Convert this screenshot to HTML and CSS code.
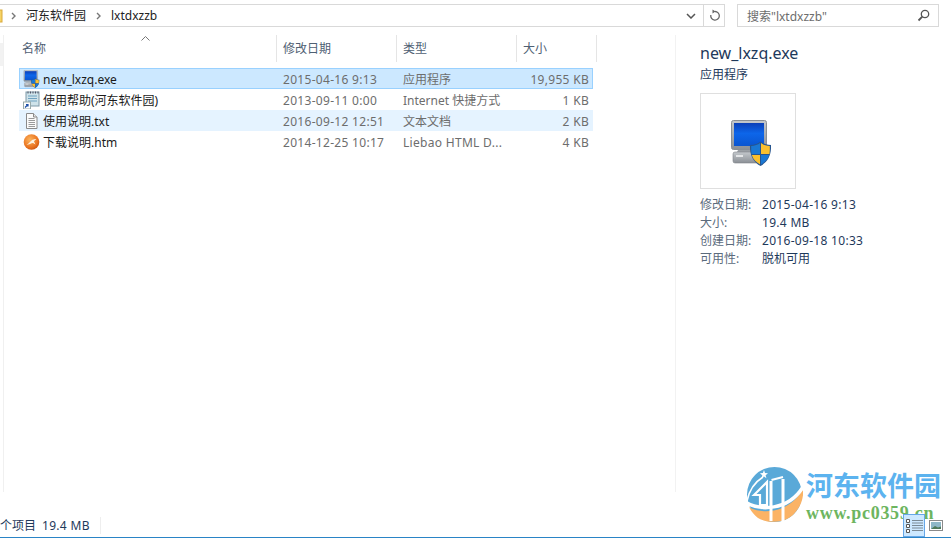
FILE: index.html
```html
<!DOCTYPE html>
<html lang="zh-CN">
<head>
<meta charset="utf-8">
<title>lxtdxzzb</title>
<link rel="stylesheet" href="styles.css">
</head>
<body>
<svg class="defs" width="0" height="0">
  <defs>
    <linearGradient id="scr" x1="0" y1="0" x2="0" y2="1"><stop offset="0" stop-color="#0a3fb8"/><stop offset=".45" stop-color="#0d66ea"/><stop offset="1" stop-color="#0a55d0"/></linearGradient>
    <linearGradient id="case" x1="0" y1="0" x2="0" y2="1"><stop offset="0" stop-color="#c4c8cc"/><stop offset="1" stop-color="#8b9096"/></linearGradient>
    <radialGradient id="orb" cx=".4" cy=".35" r=".7"><stop offset="0" stop-color="#fbb45e"/><stop offset=".7" stop-color="#ea7420"/><stop offset="1" stop-color="#c9540f"/></radialGradient>
    <symbol id="exe" viewBox="0 0 40 46">
      <rect x="0.5" y="0.5" width="35" height="29" rx="2" fill="url(#case)" stroke="#8a8f94"/>
      <rect x="3" y="3" width="30" height="23" fill="url(#scr)"/>
      <path d="M7 30h20l1 2H6z" fill="#9a9fa4"/>
      <rect x="2" y="32" width="28" height="11" rx="2" fill="url(#case)" stroke="#80858a" stroke-width=".6"/>
      <rect x="5" y="35" width="7" height="2" fill="#e4e6e8"/>
      <path d="M19 25c5 0 8-1.500 10.500-3.500 2.500 2 6 3.500 10.500 3.500 .5 10-3 17-10.500 21-7.500-4-11-11-10.500-21z" fill="#27558f"/>
      <path d="M29 23v11h-8.500c-.3-2-.4-5-.3-8 3.500-.2 6.800-1.200 8.800-3z" fill="#1a78d4"/>
      <path d="M30 23c2 1.800 5 2.800 8.800 3 .1 3 0 6-.3 8H30z" fill="#fbc02d"/>
      <path d="M20.800 35H29v9.500c-4-2.500-7-5-8.200-9.500z" fill="#fbc02d"/>
      <path d="M30 35h8.200c-1.200 4.500-4.200 7-8.200 9.500z" fill="#1a78d4"/>
    </symbol>
  </defs>
</svg>
<div class="window">
  <header class="toolbar">
    <div class="address">
      <svg class="folder" width="3" height="14" viewBox="0 0 3 14"><rect x="-8" y="1" width="10" height="12" fill="#f6d365" stroke="#d9a93a"/></svg>
      <svg class="crumb-arrow" width="7" height="8" viewBox="0 0 7 8"><path d="M2 1l3 3-3 3" fill="none" stroke="#777" stroke-width="1.400"/></svg>
      <span class="crumb">河东软件园</span>
      <svg class="crumb-arrow" width="7" height="8" viewBox="0 0 7 8"><path d="M2 1l3 3-3 3" fill="none" stroke="#777" stroke-width="1.400"/></svg>
      <span class="crumb">lxtdxzzb</span>
      <svg class="chevron" width="10" height="6" viewBox="0 0 10 6"><path d="M1 1l4 4 4-4" fill="none" stroke="#555" stroke-width="1.500"/></svg>
      <span class="refresh">
        <svg width="12" height="13" viewBox="0 0 12 13"><path d="M6 2.500a4.300 4.300 0 1 1-4.200 3.500" fill="none" stroke="#666" stroke-width="1.300"/><path d="M3.500 0.500l3 2-3 2z" fill="#666"/></svg>
      </span>
    </div>
    <div class="search">
      <span class="search-text">搜索"lxtdxzzb"</span>
      <svg width="13" height="13" viewBox="0 0 13 13"><circle cx="8" cy="5" r="3.700" fill="none" stroke="#555" stroke-width="1.300"/><path d="M5.300 7.700L1.500 11.500" stroke="#555" stroke-width="1.800"/></svg>
    </div>
  </header>

  <main class="content">
    <section class="files">
      <div class="gutter"><span class="gutter-thumb"></span></div>
      <div class="list">
        <div class="head">
          <span class="sort"><svg width="9" height="5" viewBox="0 0 9 5"><path d="M.5 4.500l4-4 4 4" fill="none" stroke="#777"/></svg></span>
          <div class="hcell col-name">名称</div>
          <div class="hcell col-date">修改日期</div>
          <div class="hcell col-type">类型</div>
          <div class="hcell col-size">大小</div>
        </div>
        <div class="rows">
          <div class="row selected">
            <div class="cell col-name name"><svg class="ico" width="17" height="18"><use href="#exe"/></svg>new_lxzq.exe</div>
            <div class="cell col-date wide">2015-04-16 9:13</div>
            <div class="cell col-type">应用程序</div>
            <div class="cell col-size num wide">19,955 KB</div>
          </div>
          <div class="row">
            <div class="cell col-name name">
              <svg class="ico" width="17" height="18" viewBox="0 0 17 18"><rect x="3" y="1" width="13" height="14" fill="#cfe3ea" stroke="#7f9aa8"/><path d="M5 .5v2M7.500 .5v2M10 .5v2M12.500 .5v2M15 .5v2" stroke="#556"/><path d="M5 5h9M5 7.500h9M5 10h9" stroke="#6fa2c0"/><rect x="0.500" y="11" width="7" height="7" fill="#fff" stroke="#9aa"/><path d="M2 16.500l3-3M3 13.500h2v2" fill="none" stroke="#1c4fa8" stroke-width="1.200"/></svg>
              使用帮助(河东软件园)</div>
            <div class="cell col-date wide">2013-09-11 0:00</div>
            <div class="cell col-type">Internet 快捷方式</div>
            <div class="cell col-size num wide">1 KB</div>
          </div>
          <div class="row hover">
            <div class="cell col-name name">
              <svg class="ico" width="17" height="18" viewBox="0 0 17 18"><path d="M3.500 1.500h7l3.500 3.500v11.500h-10.500z" fill="#fbfbfb" stroke="#8a8a8a"/><path d="M10.500 1.500v3.500h3.500" fill="#e6e6e6" stroke="#8a8a8a"/><path d="M5.500 6.500h6M5.500 8.500h6.500M5.500 10.500h6.500M5.500 12.500h6.500M5.500 14.500h6.500" stroke="#9a9a9a"/></svg>
              使用说明.txt</div>
            <div class="cell col-date wide">2016-09-12 12:51</div>
            <div class="cell col-type">文本文档</div>
            <div class="cell col-size num wide">2 KB</div>
          </div>
          <div class="row">
            <div class="cell col-name name">
              <svg class="ico" width="17" height="18" viewBox="0 0 17 18"><circle cx="8.500" cy="9" r="7.800" fill="url(#orb)"/><path d="M3.500 12c2-1 3-3 5-4.500 1.200-1 3-1.500 5-1.500-1 .8-2 1.500-2.500 2.500l1.500 3-2.500-1.500c-1 0-2 .5-3 1-1 .2-2.500.7-3.500 1z" fill="#fdf1e0"/></svg>
              下载说明.htm</div>
            <div class="cell col-date wide">2014-12-25 10:17</div>
            <div class="cell col-type wide">Liebao HTML D...</div>
            <div class="cell col-size num wide">4 KB</div>
          </div>
        </div>
      </div>
    </section>

    <aside class="details">
      <h1 class="d-title">new_lxzq.exe</h1>
      <p class="d-kind">应用程序</p>
      <div class="preview"><svg width="40" height="46"><use href="#exe"/></svg></div>
      <dl class="props">
        <dt>修改日期:</dt><dd class="wide">2015-04-16 9:13</dd>
        <dt>大小:</dt><dd class="wide">19.4 MB</dd>
        <dt>创建日期:</dt><dd class="wide">2016-09-18 10:33</dd>
        <dt>可用性:</dt><dd>脱机可用</dd>
      </dl>
    </aside>
  </main>

  <footer class="status">
    <span class="st-items">个项目</span>
    <span class="st-size wide">19.4 MB</span>
    <span class="st-sep"></span>
    <span class="views">
      <span class="view active"><svg width="17" height="15" viewBox="0 0 17 15"><path d="M.5 1.500h3v3h-3zM.5 6.500h3v3h-3zM.5 11.500h3v3h-3z" fill="#fff" stroke="#555"/><path d="M6 2.500h11M6 5h11M6 7.500h11M6 10h11M6 12.500h11" stroke="#7a8a96"/></svg></span>
      <span class="view"><svg width="14" height="11" viewBox="0 0 14 11"><rect x=".5" y=".5" width="13" height="10" fill="#fff" stroke="#8a8a8a"/><rect x="2" y="2" width="10" height="7" fill="#8fb8c8"/><path d="M2 9l4-3 3 1.500 3-1V9z" fill="#4f7a5a"/></svg></span>
    </span>
  </footer>

  <div class="watermark">
    <svg class="wm-logo" width="57" height="56" viewBox="0 0 57 56">
      <circle cx="28.500" cy="27.500" r="27.500" fill="#5aa9d8"/>
      <path d="M3 40C14 47 42 48 57 22 58 30 55 40 47 48 38 56 22 57 12 51 8 48 5 44 3 40z" fill="#fbb365"/>
      <path d="M-1 35C14 44 42 44 57 20" fill="none" stroke="#fff" stroke-width="3.500"/>
      <path d="M1 34C3 24 9 15 17 10" fill="none" stroke="#fff" stroke-width="1.600"/>
      <path d="M8 28L21 15V38H14V28z" fill="#5aa9d8" stroke="#fff" stroke-width="2.200"/>
      <path d="M25 14V54M37 12V54" stroke="#fff" stroke-width="3"/>
      <path d="M25.500 13L37 10" stroke="#fff" stroke-width="2"/>
      <path d="M18 3l1 3 3 .2-2.400 2 .8 3L18 9.500 15.500 11.200l.8-3-2.400-2 3-.2z" fill="#fff"/>
    </svg>
    <div class="wm-text">
      <div class="wm-cn">河东软件园</div>
      <div class="wm-url">www.pc0359.cn</div>
    </div>
  </div>
</div>
</body>
</html>
```
FILE: styles.css
```css
* { box-sizing: border-box; }
html, body { margin: 0; padding: 0; height: 100%; background: #fff; overflow: hidden; }
body { font-family: "Noto Sans", "Noto Sans CJK SC", sans-serif; font-size: 12px; color: #1a1a1a; }
.defs { display: block; height: 0; }
.window { position: relative; width: 951px; height: 538px; display: flex; flex-direction: column; overflow: hidden; }
.wide { letter-spacing: .3px; }

.toolbar { display: flex; height: 23px; margin-top: 4px; gap: 12px; flex: none; padding-right: 12px; }
.address { width: 725px; display: flex; align-items: center; border: 1px solid #d9d9d9; border-left: 0; }
.folder { flex: none; margin-right: 7px; }
.crumb-arrow { flex: none; margin-right: 9px; }
.crumb { margin-right: 9px; line-height: 18px; color: #222; }
.chevron { margin-left: auto; margin-right: 7px; }
.refresh { width: 21px; height: 100%; border-left: 1px solid #d9d9d9; display: flex; align-items: center; justify-content: center; padding-left: 1px; }
.search { width: 202px; display: flex; align-items: center; justify-content: space-between; border: 1px solid #d9d9d9; padding: 0 8px 0 9px; }
.search-text { color: #6d6d6d; }

.content { flex: 1; display: flex; min-height: 0; }
.files { width: 676px; flex: none; display: flex; margin-top: 8px; margin-bottom: 22px; border-right: 1px solid #f2f2f2; }
.gutter { width: 4px; flex: none; border-right: 1px solid #f0f0f0; margin-right: 15px; padding-top: 8px; }
.gutter-thumb { display: block; width: 3px; height: 23px; background: #f2f2f2; }
.list { width: 578px; }
.head { position: relative; display: flex; height: 27px; margin-bottom: 6px; }
.sort { position: absolute; left: 122px; top: -1px; line-height: 5px; }
.hcell { display: flex; align-items: center; height: 27px; color: #4f6073; border-right: 1px solid #e5e5e5; line-height: 27px; }
.col-name { width: 258px; padding-left: 3px; flex: none; }
.col-date { width: 120px; padding-left: 6px; flex: none; }
.col-type { width: 120px; padding-left: 6px; flex: none; }
.col-size { width: 80px; padding-left: 6px; flex: none; }

.rows { width: 574px; }
.row { display: flex; height: 21px; align-items: center; color: #6d6d6d; }
.row.selected { background: #cce8ff; box-shadow: inset 0 0 0 1px #99d1ff; }
.row.hover { background: #e5f3ff; }
.cell { white-space: nowrap; line-height: 21px; padding-top: 1px; }
.row .col-name { width: 257px; }
.row .col-size { width: 77px; padding-left: 0; padding-right: 4px; }
.row .col-date { padding-left: 7px; }
.row .col-type { padding-left: 7px; }
.name { display: flex; align-items: center; color: #1a1a1a; padding-left: 4px; }
.ico { flex: none; margin-right: 3px; }
.num { text-align: right; }

.details { flex: 1; padding: 14px 0 0 24px; }
.d-title { margin: 0; font-size: 16px; font-weight: 400; line-height: 24px; color: #1e395b; }
.d-kind { margin: 1px 0 0; line-height: 18px; color: #1e395b; }
.preview { width: 96px; height: 96px; margin-top: 9px; border: 1px solid #dfdfdf; display: flex; align-items: center; justify-content: center; padding: 3px 0 0 6px; }
.props { margin: 7px 0 0; display: grid; grid-template-columns: 62px auto; grid-auto-rows: 18px; line-height: 18px; }
.props dt { color: #5b6b7c; }
.props dd { margin: 0; color: #1e395b; }

.status { position: relative; z-index: 1; height: 24px; flex: none; display: flex; align-items: center; border-bottom: 1px solid #2a84c6; padding-bottom: 1px; color: #1e395b; }
.st-items { margin-right: 6px; }
.st-size { margin-right: 10px; }
.st-sep { width: 1px; height: 17px; background: #eee; }
.views { margin-left: auto; margin-right: 8px; display: flex; align-items: center; gap: 4px; height: 23px; margin-bottom: -1px; }
.view { display: flex; align-items: center; justify-content: center; }
.view.active { width: 22px; height: 23px; background: #cce8ff; border: 1px solid #66a7e8; }

.watermark { position: absolute; left: 746px; top: 467px; display: flex; gap: 3px; pointer-events: none; }
.wm-logo { flex: none; }
.wm-text { padding-top: 2px; }
.wm-cn { font-family: "Noto Sans CJK SC", sans-serif; font-weight: 700; font-size: 27px; line-height: 32px; color: #5cb3ef; white-space: nowrap; }
.wm-url { font-family: "Liberation Serif", serif; font-weight: 700; font-size: 18px; line-height: 20px; letter-spacing: .7px; margin-top: 2px; color: #6db560; white-space: nowrap; }
```
